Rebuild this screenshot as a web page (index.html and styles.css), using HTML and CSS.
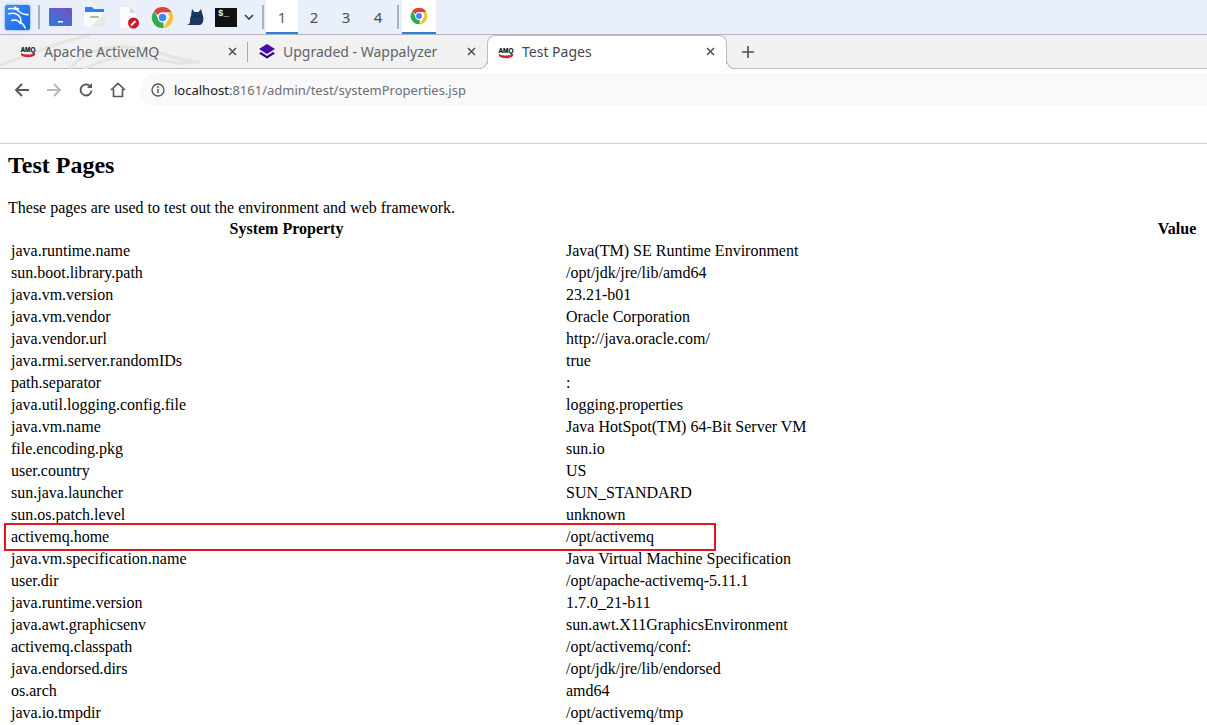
FILE: index.html
```html
<!DOCTYPE html>
<html lang="en">
<head>
  <meta charset="UTF-8">
  <title>Test Pages</title>
  <link rel="stylesheet" href="styles.css">
</head>
<body>

  <!-- Desktop panel -->
  <div class="panel">
    <div class="launcher kali">
      <svg width="25" height="25" viewBox="0 0 26 26">
        <path d="M4 4c3-1 8 0 11 3 2 2 5 3 9 3M4 9c5-1 9 0 11 3 2 3 2 5 1 7-2-3-5-4-9-3M16 18c2 1 4 3 5 6M10 2c1 1 2 2 4 2" fill="none" stroke="#fff" stroke-width="1.600" stroke-linecap="round"/>
      </svg>
    </div>
    <span class="panel-sep sep-launchers"></span>
    <div class="launcher wide">
      <svg width="23" height="18" viewBox="0 0 23 18">
        <defs>
          <linearGradient id="deskBg" x1="0" y1="1" x2="1" y2="0">
            <stop offset="0" stop-color="#3079e0"/>
            <stop offset="1" stop-color="#7a4fc0"/>
          </linearGradient>
        </defs>
        <rect width="23" height="18" rx="1" fill="url(#deskBg)"/>
        <rect x="9" y="13" width="5" height="1.500" fill="#fff"/>
      </svg>
    </div>
    <div class="launcher wide">
      <svg width="23" height="20" viewBox="0 0 23 20">
        <path d="M2 0h7l2 2h10v5H2z" fill="#2f80ed"/>
        <path d="M1 5h21v15H1z" fill="#fafafa"/>
        <path d="M22 5v15H8z" fill="#e9e9e9"/>
        <rect x="7" y="9" width="9" height="2" rx="1" fill="#b5b5b5"/>
      </svg>
    </div>
    <div class="launcher wide">
      <svg width="23" height="23" viewBox="0 0 23 23">
        <path d="M3 1h10l6 6v15H3z" fill="#fbfbfb"/>
        <path d="M13 1l6 6h-6z" fill="#d8d8d8"/>
        <circle cx="16.500" cy="17" r="5.500" fill="#d3131f"/>
        <path d="M14 19.500l4.500-4.500" stroke="#fff" stroke-width="2"/>
      </svg>
    </div>
    <div class="launcher">
      <svg class="chrome-icon" viewBox="0 0 48 48">
        <path d="M24 2a22 22 0 0 1 19.100 11H24a11 11 0 0 0-10 6.500L6.300 10.800A22 22 0 0 1 24 2z" fill="#db4437"/>
        <path d="M43.100 13A22 22 0 0 1 26 46l9.600-16.500A11 11 0 0 0 33.500 13z" fill="#fbc02d"/>
        <path d="M26 46A22 22 0 0 1 6.300 10.800L14 24a11 11 0 0 0 12 10.800z" fill="#34a853"/>
        <circle cx="24" cy="24" r="10" fill="#fff"/>
        <circle cx="24" cy="24" r="7.800" fill="#4285f4"/>
      </svg>
    </div>
    <div class="launcher cat-slot">
      <svg width="20" height="20" viewBox="0 0 20 20">
        <path d="M6 2l2.500 3h4L15 2l2 7c1 4 0 8-3 9H1c1-1 3-1 3-3 0-3 0-4 1-6z" fill="#19395f"/>
        <circle cx="9" cy="9" r=".8" fill="#0c1c30"/>
        <circle cx="13" cy="9" r=".8" fill="#0c1c30"/>
      </svg>
    </div>
    <div class="terminal-icon">$_</div>
    <svg class="chevron" width="10" height="6" viewBox="0 0 10 6">
      <path d="M1 1l4 4 4-4" fill="none" stroke="#333b45" stroke-width="1.600"/>
    </svg>
    <span class="panel-sep sep-workspaces"></span>
    <div class="workspace active">1</div>
    <div class="workspace">2</div>
    <div class="workspace">3</div>
    <div class="workspace">4</div>
    <span class="panel-sep sep-tasks"></span>
    <div class="task">
      <svg class="chrome-icon small" viewBox="0 0 48 48">
        <path d="M24 2a22 22 0 0 1 19.100 11H24a11 11 0 0 0-10 6.500L6.300 10.800A22 22 0 0 1 24 2z" fill="#db4437"/>
        <path d="M43.100 13A22 22 0 0 1 26 46l9.600-16.500A11 11 0 0 0 33.500 13z" fill="#fbc02d"/>
        <path d="M26 46A22 22 0 0 1 6.300 10.800L14 24a11 11 0 0 0 12 10.800z" fill="#34a853"/>
        <circle cx="24" cy="24" r="10" fill="#fff"/>
        <circle cx="24" cy="24" r="7.800" fill="#4285f4"/>
      </svg>
    </div>
  </div>

  <!-- Browser tabs -->
  <div class="tabstrip">
    <svg class="dragon" width="260" height="34" viewBox="0 0 260 34">
      <path d="M0 30L60 8l30-8M70 34c10-14 30-24 60-22 14 1 30 6 50 12l20 3-22 1c-20-3-34-6-48-6-20 0-34 6-46 12" fill="none" stroke="#e4e4e4" stroke-width="3"/>
    </svg>
    <div class="tab first">
      <svg class="amq" viewBox="0 0 16 16"><text x="8" y="9" text-anchor="middle">AMQ</text><path d="M1 10c4 2 10 2 14 0v2c-3 3-11 3-14 0z" fill="#d5203a"/></svg>
      <span class="tab-title">Apache ActiveMQ</span>
      <svg class="tab-close" viewBox="0 0 9 9"><path d="M1 1l7 7M8 1L1 8"/></svg>
    </div>
    <span class="tab-sep"></span>
    <div class="tab second">
      <svg class="favicon" viewBox="0 0 16 16">
        <path d="M8 1l8 5-8 5-8-5z" fill="#4608ad"/>
        <path d="M2 9l6 4 6-4 2 1.500-8 5-8-5z" fill="#2d0575"/>
      </svg>
      <span class="tab-title">Upgraded - Wappalyzer</span>
      <svg class="tab-close" viewBox="0 0 9 9"><path d="M1 1l7 7M8 1L1 8"/></svg>
    </div>
    <div class="tab current">
      <svg class="amq" viewBox="0 0 16 16"><text x="8" y="9" text-anchor="middle">AMQ</text><path d="M1 10c4 2 10 2 14 0v2c-3 3-11 3-14 0z" fill="#d5203a"/></svg>
      <span class="tab-title">Test Pages</span>
      <svg class="tab-close" viewBox="0 0 9 9"><path d="M1 1l7 7M8 1L1 8"/></svg>
    </div>
    <svg class="new-tab" width="12" height="12" viewBox="0 0 12 12">
      <path d="M6 0v12M0 6h12" stroke="#4a4f57" stroke-width="1.600"/>
    </svg>
  </div>

  <!-- Address bar -->
  <div class="toolbar">
    <svg class="nav-icon" viewBox="0 0 16 16"><path d="M15 8H2M8 2L2 8l6 6" fill="none" stroke="#55595f" stroke-width="1.900"/></svg>
    <svg class="nav-icon" viewBox="0 0 16 16"><path d="M1 8h13M8 2l6 6-6 6" fill="none" stroke="#b4b7bb" stroke-width="1.900"/></svg>
    <svg class="nav-icon" viewBox="0 0 16 16"><path d="M13.500 8.500A5.500 5.500 0 1 1 12 4.200" fill="none" stroke="#55595f" stroke-width="1.900"/><path d="M14 1v5H9z" fill="#55595f"/></svg>
    <svg class="nav-icon" viewBox="0 0 16 16"><path d="M1 8l7-6.500L15 8M3.500 7v7.500h9V7" fill="none" stroke="#55595f" stroke-width="1.700"/></svg>
    <div class="omnibox">
      <svg class="info-icon" width="14" height="14" viewBox="0 0 14 14">
        <circle cx="7" cy="7" r="6" fill="none" stroke="#4f5359" stroke-width="1.300"/>
        <path d="M7 6v4.200" stroke="#4f5359" stroke-width="1.400"/>
        <circle cx="7" cy="4" r=".9" fill="#4f5359"/>
      </svg>
      <span class="host">localhost</span><span class="url-rest">:8161/admin/test/systemProperties.jsp</span>
    </div>
  </div>
  <div class="bookmarks"></div>

  <!-- Page content -->
  <div class="content">
    <h1>Test Pages</h1>
    <p>These pages are used to test out the environment and web framework.</p>
    <table>
      <thead>
        <tr>
          <th class="col-name">System Property</th>
          <th class="col-value">Value</th>
        </tr>
      </thead>
      <tbody>
        <tr><td>java.runtime.name</td><td>Java(TM) SE Runtime Environment</td></tr>
        <tr><td>sun.boot.library.path</td><td>/opt/jdk/jre/lib/amd64</td></tr>
        <tr><td>java.vm.version</td><td>23.21-b01</td></tr>
        <tr><td>java.vm.vendor</td><td>Oracle Corporation</td></tr>
        <tr><td>java.vendor.url</td><td>http://java.oracle.com/</td></tr>
        <tr><td>java.rmi.server.randomIDs</td><td>true</td></tr>
        <tr><td>path.separator</td><td>:</td></tr>
        <tr><td>java.util.logging.config.file</td><td>logging.properties</td></tr>
        <tr><td>java.vm.name</td><td>Java HotSpot(TM) 64-Bit Server VM</td></tr>
        <tr><td>file.encoding.pkg</td><td>sun.io</td></tr>
        <tr><td>user.country</td><td>US</td></tr>
        <tr><td>sun.java.launcher</td><td>SUN_STANDARD</td></tr>
        <tr><td>sun.os.patch.level</td><td>unknown</td></tr>
        <tr class="marked"><td>activemq.home</td><td>/opt/activemq<span class="highlight"></span></td></tr>
        <tr><td>java.vm.specification.name</td><td>Java Virtual Machine Specification</td></tr>
        <tr><td>user.dir</td><td>/opt/apache-activemq-5.11.1</td></tr>
        <tr><td>java.runtime.version</td><td>1.7.0_21-b11</td></tr>
        <tr><td>java.awt.graphicsenv</td><td>sun.awt.X11GraphicsEnvironment</td></tr>
        <tr><td>activemq.classpath</td><td>/opt/activemq/conf:</td></tr>
        <tr><td>java.endorsed.dirs</td><td>/opt/jdk/jre/lib/endorsed</td></tr>
        <tr><td>os.arch</td><td>amd64</td></tr>
        <tr><td>java.io.tmpdir</td><td>/opt/activemq/tmp</td></tr>
      </tbody>
    </table>
  </div>

</body>
</html>
```

FILE: styles.css
```css
/* Global styles */
html, body {
  height: 725px;
  overflow: hidden;
}

body {
  margin: 0;
  background-color: #fff;
  color: #000;
  font-family: 'Liberation Serif', serif;
  font-size: 16px;
}

/* Desktop panel */
.panel {
  display: flex;
  align-items: center;
  height: 34px;
  padding-left: 5px;
  background-color: #e9f0f9;
  border-bottom: 1px solid #aeb4bb;
}

.launcher {
  display: flex;
  justify-content: center;
  align-items: center;
}

.launcher.kali {
  width: 25px;
  height: 25px;
  border-radius: 2px;
  background: linear-gradient(135deg, #3f8df5, #1566e8);
  box-shadow: 0 0 3px #6aa8f5;
}

.launcher.wide {
  width: 23px;
  margin-right: 11px;
}

.cat-slot {
  width: 20px;
  margin-left: 12px;
  margin-right: 9px;
}

.panel-sep {
  flex: none;
  width: 2px;
  height: 24px;
  background-color: #aab2bc;
}

.sep-launchers {
  margin: 0 9px 0 8px;
}

.chrome-icon {
  width: 23px;
  height: 23px;
}

.chrome-icon.small {
  width: 18px;
  height: 18px;
}

.terminal-icon {
  width: 22px;
  height: 19px;
  padding-left: 3px;
  box-sizing: border-box;
  background-color: #111;
  color: #eee;
  font-family: 'Liberation Mono', monospace;
  font-size: 9px;
  font-weight: bold;
  line-height: 13px;
}

.chevron {
  margin-left: 7px;
}

.sep-workspaces {
  margin: 0 2px 0 8px;
}

.sep-tasks {
  margin: 0 3px;
}

.workspace {
  width: 32px;
  height: 34px;
  box-sizing: border-box;
  color: #4a4f57;
  font-family: 'Noto Sans', sans-serif;
  font-size: 15px;
  line-height: 34px;
  text-align: center;
}

.workspace.active {
  background-color: #fff;
  border-bottom: 2px solid #2a7de1;
  color: #6b5a50;
}

.task {
  display: flex;
  justify-content: center;
  align-items: center;
  width: 34px;
  height: 34px;
  box-sizing: border-box;
  background-color: #fff;
  border-bottom: 2px solid #2a7de1;
}

/* Tabs */
.tabstrip {
  position: relative;
  display: flex;
  align-items: center;
  height: 34px;
  background-color: #f1f1f1;
  box-shadow: inset 0 -1px 0 #bdbdbd;
  overflow: hidden;
}

.dragon {
  position: absolute;
  left: 0;
  top: 0;
}

.tab {
  position: relative;
  display: flex;
  align-items: center;
  height: 34px;
  padding-bottom: 2px;
  box-sizing: border-box;
  color: #5f6368;
  font-family: 'Noto Sans', sans-serif;
  font-size: 14px;
}

.tab.first {
  width: 247px;
  padding-left: 20px;
}

.tab.second {
  width: 239px;
  padding-left: 11px;
}

.tab.current {
  width: 240px;
  padding-left: 10px;
  background-color: #fff;
  border: 1px solid #bdbdbd;
  border-bottom: none;
  border-radius: 8px 8px 0 0;
  color: #45494f;
}

/* Curved feet of the active tab */
.tab.current::before, .tab.current::after {
  content: '';
  position: absolute;
  bottom: 0;
  width: 6px;
  height: 6px;
  background-color: #f1f1f1;
  border-bottom: 1px solid #bdbdbd;
}

.tab.current::before {
  left: -8px;
  border-right: 1px solid #bdbdbd;
  border-bottom-right-radius: 7px;
  box-shadow: 2px 2px 0 #fff;
}

.tab.current::after {
  right: -8px;
  border-left: 1px solid #bdbdbd;
  border-bottom-left-radius: 7px;
  box-shadow: -2px 2px 0 #fff;
}

.tab-sep {
  flex: none;
  width: 1px;
  height: 20px;
  background-color: #a9a9a9;
}

.amq, .favicon {
  flex: none;
  width: 16px;
  height: 16px;
  margin-right: 8px;
}

.amq text {
  fill: #111;
  stroke: #111;
  stroke-width: .2;
  font-family: 'Liberation Sans', sans-serif;
  font-size: 6.500px;
  font-weight: bold;
}

.tab-title {
  flex: 1;
  white-space: nowrap;
}

.tab-close {
  flex: none;
  width: 9px;
  height: 9px;
  margin-right: 11px;
  fill: none;
  stroke: #4a4f57;
  stroke-width: 1.500;
}

.tab.first .tab-close {
  margin-right: 10px;
}

.new-tab {
  margin-left: 15px;
}

/* Address bar */
.toolbar {
  display: flex;
  align-items: center;
  height: 42px;
  padding-left: 14px;
  background-color: #fff;
}

.nav-icon {
  flex: none;
  width: 16px;
  height: 16px;
  margin-right: 16px;
}

.omnibox {
  display: flex;
  flex: 1;
  align-items: center;
  height: 34px;
  margin-left: -2px;
  padding-left: 11px;
  background-color: #f9f9f9;
  border-radius: 17px 0 0 17px;
  font-family: 'Noto Sans', sans-serif;
  font-size: 13px;
}

.info-icon {
  margin-right: 9px;
}

.host {
  color: #202124;
}

.url-rest {
  color: #6b6f75;
}

.bookmarks {
  height: 32px;
  border-bottom: 1px solid #d3d3d3;
}

/* Page content */
.content {
  padding: 8px 8px 0;
  overflow: hidden;
}

h1 {
  margin: 0 0 20px;
  font-size: 24px;
}

p {
  margin: 0;
}

/* Table styles */
table {
  width: 1783px;
  table-layout: fixed;
}

th, td {
  padding: 1px;
}

.col-name {
  width: 551px;
}

tr.marked td {
  position: relative;
}

/* Red marker drawn over the activemq.home row */
.highlight {
  position: absolute;
  left: -561px;
  top: -4px;
  width: 708px;
  height: 24px;
  border: 2px solid #e8141f;
}
```
